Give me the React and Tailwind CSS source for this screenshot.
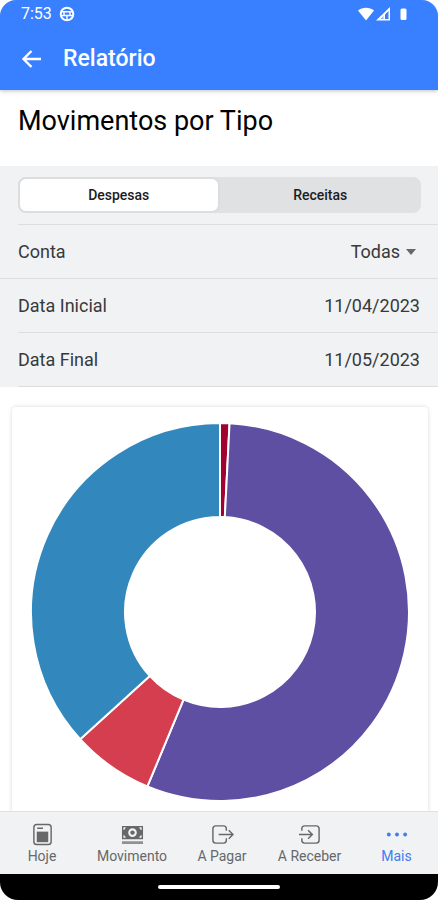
import React from "react";

const slices = [
  { name: "Outros", from: 0, to: 2.9, color: "#a2022f" },
  { name: "Moradia", from: 2.9, to: 202.6, color: "#5e4fa2" },
  { name: "Lazer", from: 202.6, to: 227.7, color: "#d53e4f" },
  { name: "Mercado", from: 227.7, to: 360, color: "#3288bd" },
];

function point(radius, degrees) {
  const a = (degrees * Math.PI) / 180;
  return `${(190 + radius * Math.sin(a)).toFixed(2)} ${(190 - radius * Math.cos(a)).toFixed(2)}`;
}

function arc({ from, to }) {
  const large = to - from > 180 ? 1 : 0;
  return `M${point(189, from)} A189 189 0 ${large} 1 ${point(189, to)} L${point(95, to)} A95 95 0 ${large} 0 ${point(95, from)} Z`;
}

function Donut() {
  return (
    <svg viewBox="0 0 380 380" className="mx-auto block w-full max-w-[380px]" role="img">
      {slices.map((s) => (
        <path key={s.name} d={arc(s)} fill={s.color} stroke="#fff" strokeWidth="2" />
      ))}
    </svg>
  );
}

function StatusBar() {
  return (
    <div className="flex h-7 items-center pl-[21px] pr-[29px] text-base leading-5">
      <span>7:53</span>
      <svg viewBox="0 0 16 16" className="ml-[7px] size-4" fill="none" stroke="currentColor" strokeWidth="2">
        <circle cx="8" cy="8" r="6.3" />
        <path d="M2 5.8h12M2.500 9.500h11M8 9.500V14M5 9.500V6M11 9.500V6" strokeWidth="1.400" />
      </svg>
      <svg viewBox="0 0 52 16" className="ml-auto h-4 w-[52px]" fill="currentColor">
        <path d="M1 4.500C5.500.9 12.500.9 17 4.500L9 14.500Z" />
        <path d="M33 1v13.500H19Z M31.500 5v8h-3.500V8.500Z" fillRule="evenodd" />
        <path d="M26.500 10v3h-3Z" fill="#3880ff" opacity=".6" />
        <rect x="43.500" y="2.500" width="6" height="11.500" rx="1.500" />
      </svg>
    </div>
  );
}

function DateRow({ id, label, value }) {
  return (
    <div className="ml-[18px] flex h-[54px] items-center justify-between border-b border-[#dcddde] pr-[18px]">
      <label htmlFor={id}>{label}</label>
      <input id={id} defaultValue={value} className="w-32 bg-transparent text-right outline-none" />
    </div>
  );
}

const tabs = [
  {
    label: "Hoje",
    icon: (
      <>
        <rect x="3" y="1.500" width="18" height="21" rx="3" />
        <path d="M6.500 5.500h6" />
        <rect x="6" y="9" width="12" height="11" fill="currentColor" stroke="none" />
      </>
    ),
  },
  {
    label: "Movimento",
    icon: (
      <>
        <path fill="currentColor" stroke="none" fillRule="evenodd" d="M1 3h22v14H1Z M12 5.500a4.500 4.500 0 1 0 0 9 4.500 4.500 0 0 0 0-9Z M2.500 7.500a4 4 0 0 0 2.500-3H2.500Z M21.500 7.500A4 4 0 0 1 19 4.500h2.500Z M2.500 12.500A4 4 0 0 1 5 15.500H2.500Z M21.500 12.500a4 4 0 0 0-2.500 3h2.500Z" />
        <circle cx="12" cy="10" r="2.300" fill="currentColor" stroke="none" />
        <path d="M1 20.500h22" strokeWidth="3" opacity=".7" />
      </>
    ),
  },
  {
    label: "A Pagar",
    icon: <path d="M16 8V6a3 3 0 0 0-3-3H5a3 3 0 0 0-3 3v12a3 3 0 0 0 3 3h8a3 3 0 0 0 3-3v-2M8 12h15M18.500 7.500 23 12l-4.500 4.500" />,
  },
  {
    label: "A Receber",
    icon: <path d="M4 8V6a3 3 0 0 1 3-3h12a3 3 0 0 1 3 3v12a3 3 0 0 1-3 3H7a3 3 0 0 1-3-3v-2M1 12h14M10.500 7.500 15 12l-4.500 4.500" />,
  },
  {
    label: "Mais",
    active: true,
    icon: (
      <g fill="currentColor" stroke="none">
        <circle cx="4" cy="12" r="2" />
        <circle cx="12.500" cy="12" r="2" />
        <circle cx="21" cy="12" r="2" />
      </g>
    ),
  },
];

export default function App() {
  return (
    <div className="flex h-screen flex-col overflow-hidden rounded-t-2xl rounded-b-[18px] bg-white font-[Roboto,sans-serif] text-[#37393b]">
      <header className="z-10 shrink-0 bg-[#3880ff] text-white shadow-[0_1px_4px_rgba(0,0,0,0.25)]">
        <StatusBar />
        <div className="flex h-[62px] items-center gap-5 pl-[21px]">
          <button aria-label="Voltar">
            <svg viewBox="0 0 22 22" className="block size-[22px]" fill="none" stroke="currentColor" strokeWidth="2.400">
              <path d="M20 11H3M10.500 3 2.500 11l8 8" />
            </svg>
          </button>
          <span className="text-[23px] font-medium leading-7">Relatório</span>
        </div>
      </header>

      <main className="min-h-0 flex-1 overflow-hidden">
        <h1 className="h-[76px] px-[18px] pt-[15px] text-[27px] leading-8 text-black">Movimentos por Tipo</h1>

        <section className="bg-[#f1f2f4] text-lg leading-6">
          <div className="ml-[18px] border-b border-[#dcddde] py-[11px] pr-[17px]">
            <div className="grid h-9 grid-cols-2 rounded-lg bg-[#e0e1e3] text-sm font-medium text-[#1c1c1e]">
              <button aria-pressed="true" className="rounded-lg border-2 border-[#dcddde] bg-white">Despesas</button>
              <button aria-pressed="false">Receitas</button>
            </div>
          </div>

          <div className="flex h-[54px] items-center justify-between border-b border-[#dcddde] px-[18px]">
            <label htmlFor="conta">Conta</label>
            <div className="flex items-center">
              <select id="conta" className="appearance-none bg-transparent text-right outline-none">
                <option>Todas</option>
              </select>
              <svg viewBox="0 0 10 6" className="ml-1.5 mr-1 h-1.5 w-2.5" fill="#66686a">
                <path d="M0 0h10L5 6Z" />
              </svg>
            </div>
          </div>

          <DateRow id="inicio" label="Data Inicial" value="11/04/2023" />
          <DateRow id="fim" label="Data Final" value="11/05/2023" />
        </section>

        <section className="ml-3 mr-2.5 mt-5 rounded bg-white px-[18px] pb-8 pt-[15px] shadow-[0_0_4px_rgba(0,0,0,0.15)]">
          <Donut />
        </section>
      </main>

      <nav className="z-10 grid h-[63px] shrink-0 grid-cols-[84fr_96fr_84fr_91fr_83fr] border-t border-[#dfe0e1] bg-[#f1f2f4]">
        {tabs.map((tab) => (
          <button
            key={tab.label}
            className={`flex flex-col items-center pt-[11px] text-sm leading-5 ${tab.active ? "text-[#3f7df0]" : "text-[#66686a]"}`}
          >
            <svg viewBox="0 0 24 24" className="size-[23px] shrink-0" fill="none" stroke="currentColor" strokeWidth="1.500">
              {tab.icon}
            </svg>
            <span>{tab.label}</span>
          </button>
        ))}
      </nav>

      <div className="flex h-[26px] shrink-0 items-center justify-center bg-black">
        <div className="h-1 w-[122px] rounded-full bg-white" />
      </div>
    </div>
  );
}
